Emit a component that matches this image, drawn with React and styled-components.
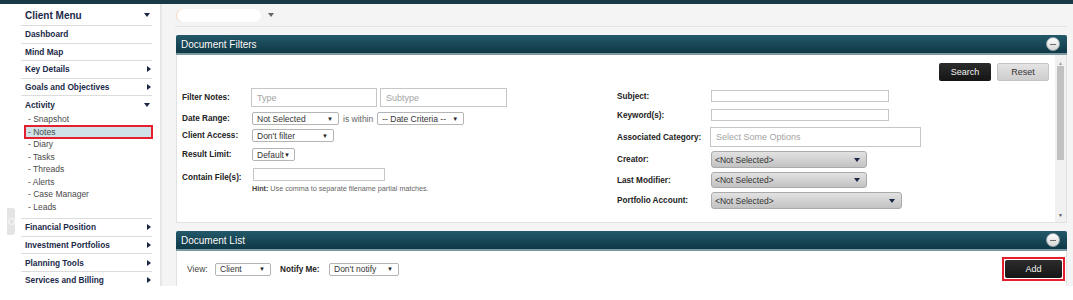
import styled, { createGlobalStyle } from "styled-components";

const GlobalStyle = createGlobalStyle`
    body {
        margin: 0;
        background: #fff;
        font-family: "Liberation Sans", Arial, sans-serif;
    }
`;

const menuTop = [
    { label: "Dashboard" },
    { label: "Mind Map" },
    { label: "Key Details", arrow: "right" },
    { label: "Goals and Objectives", arrow: "right" },
];
const activityItems = ["Snapshot", "Notes", "Diary", "Tasks", "Threads", "Alerts", "Case Manager", "Leads"];
const menuBottom = ["Financial Position", "Investment Portfolios", "Planning Tools", "Services and Billing"];

const Caret = ({ dir }) => (dir === "down" ? <DownCaret /> : <RightCaret />);

const Select = ({ text, width }) => (
    <SelectBox $width={width}>
        <span>{text}</span>
        <SmallArrow>▼</SmallArrow>
    </SelectBox>
);

const Chosen = ({ width }) => (
    <ChosenBox $width={width}>
        <span>&lt;Not Selected&gt;</span>
        <DownCaret />
    </ChosenBox>
);

const App = () => {
    return (
        <>
            <GlobalStyle />
            <TopBar />
            <Layout>
                <Sidebar>
                    <MenuHeader>
                        <span>Client Menu</span>
                        <Caret dir="down" />
                    </MenuHeader>
                    {menuTop.map((m) => (
                        <MenuItem key={m.label}>
                            <span>{m.label}</span>
                            {m.arrow && <Caret dir={m.arrow} />}
                        </MenuItem>
                    ))}
                    <MenuGroup>
                        <GroupTitle>
                            <span>Activity</span>
                            <Caret dir="down" />
                        </GroupTitle>
                        {activityItems.map((s) => (
                            <SubItem key={s} $active={s === "Notes"}>- {s}</SubItem>
                        ))}
                    </MenuGroup>
                    {menuBottom.map((m) => (
                        <MenuItem key={m}>
                            <span>{m}</span>
                            <Caret dir="right" />
                        </MenuItem>
                    ))}
                    <SideTab><TabDot /></SideTab>
                </Sidebar>
                <Main>
                    <ClientRow>
                        <Redacted />
                        <DownCaret $muted />
                    </ClientRow>
                    <Panel>
                        <PanelHeader>
                            <span>Document Filters</span>
                            <CollapseButton />
                        </PanelHeader>
                        <FilterBody>
                            <FilterContent>
                                <ButtonRow>
                                    <DarkButton>Search</DarkButton>
                                    <LightButton>Reset</LightButton>
                                </ButtonRow>
                                <FormColumns>
                                    <LeftColumn>
                                        <FormRow $top={0} $h={19}>
                                            <Label $w={69}>Filter Notes:</Label>
                                            <TextInput $width={126} $height={19}>Type</TextInput>
                                            <TextInput $width={127} $height={19} $ml={3}>Subtype</TextInput>
                                        </FormRow>
                                        <FormRow $top={5} $h={13}>
                                            <Label $w={70}>Date Range:</Label>
                                            <Select text="Not Selected" width={87} />
                                            <Within>is within</Within>
                                            <Select text="-- Date Criteria --" width={87} />
                                        </FormRow>
                                        <FormRow $top={4} $h={13}>
                                            <Label $w={70}>Client Access:</Label>
                                            <Select text="Don't filter" width={82} />
                                        </FormRow>
                                        <FormRow $top={6} $h={13}>
                                            <Label $w={70}>Result Limit:</Label>
                                            <Select text="Default" width={43} />
                                        </FormRow>
                                        <FileRow>
                                            <Label $w={70}>Contain File(s):</Label>
                                            <div>
                                                <TextInput $width={132} $height={13} $ml={1} />
                                                <Hint><b>Hint:</b> Use comma to separate filename partial matches.</Hint>
                                            </div>
                                        </FileRow>
                                    </LeftColumn>
                                    <RightColumn>
                                        <FormRow $top={0} $h={12}>
                                            <Label $w={94}>Subject:</Label>
                                            <TextInput $width={178} $height={12} />
                                        </FormRow>
                                        <FormRow $top={7} $h={12}>
                                            <Label $w={94}>Keyword(s):</Label>
                                            <TextInput $width={178} $height={12} />
                                        </FormRow>
                                        <FormRow $top={6} $h={20}>
                                            <Label $w={93}>Associated Category:</Label>
                                            <TextInput $width={211} $height={20}>Select Some Options</TextInput>
                                        </FormRow>
                                        <FormRow $top={4} $h={17}>
                                            <Label $w={94}>Creator:</Label>
                                            <Chosen width={156} />
                                        </FormRow>
                                        <FormRow $top={4} $h={16}>
                                            <Label $w={94}>Last Modifier:</Label>
                                            <Chosen width={156} />
                                        </FormRow>
                                        <FormRow $top={4} $h={17}>
                                            <Label $w={94}>Portfolio Account:</Label>
                                            <Chosen width={191} />
                                        </FormRow>
                                    </RightColumn>
                                </FormColumns>
                            </FilterContent>
                            <ScrollBar>
                                <ScrollArrow>▲</ScrollArrow>
                                <ScrollThumb />
                                <ScrollArrow $bottom>▼</ScrollArrow>
                            </ScrollBar>
                        </FilterBody>
                    </Panel>
                    <Panel $top={8}>
                        <PanelHeader>
                            <span>Document List</span>
                            <CollapseButton />
                        </PanelHeader>
                        <ListBody>
                            <ViewLabel>View:</ViewLabel>
                            <Select text="Client" width={56} />
                            <Label $w={49} $ml={9}>Notify Me:</Label>
                            <Select text="Don't notify" width={70} />
                            <AddWrap>
                                <DarkButton $w={57}>Add</DarkButton>
                            </AddWrap>
                        </ListBody>
                    </Panel>
                </Main>
            </Layout>
        </>
    );
};

const TopBar = styled.div`
    height: 4px;
    background: #183a47;
`;
const Layout = styled.div`
    display: flex;
    height: 282px;
`;
const Sidebar = styled.div`
    position: relative;
    width: 131px;
    padding-left: 21px;
    padding-right: 8px;
    border-right: 2px solid #e6e6e6;
    background: #fff;
`;
const RightCaret = styled.i`
    width: 0;
    height: 0;
    margin-right: 1px;
    border-top: 3.5px solid transparent;
    border-bottom: 3.5px solid transparent;
    border-left: 4px solid #1b2644;
`;
const DownCaret = styled.i`
    width: 0;
    height: 0;
    border-left: 3.5px solid transparent;
    border-right: 3.5px solid transparent;
    border-top: 4px solid ${(p) => (p.$muted ? "#666" : "#1b2644")};
`;
const MenuRow = styled.div`
    display: flex;
    align-items: center;
    justify-content: space-between;
    padding-left: 4px;
    padding-right: 0;
    box-sizing: border-box;
    color: #1b2a48;
    font-weight: bold;
    font-size: 8.3px;
`;
const MenuHeader = styled(MenuRow)`
    height: 22px;
    font-size: 10px;
    border-bottom: 1px solid #dcdcdc;
    padding-top: 1px;
    padding-right: 2px;
`;
const MenuItem = styled(MenuRow)`
    height: 17.6px;
    border-bottom: 1px solid #dcdcdc;
`;
const MenuGroup = styled.div`
    padding-bottom: 5px;
    border-bottom: 1px solid #dcdcdc;
`;
const GroupTitle = styled(MenuRow)`
    height: 16.8px;
    padding-right: 2px;
`;
const SubItem = styled.div`
    height: 12.5px;
    line-height: 12.5px;
    box-sizing: border-box;
    margin-left: 4px;
    padding-left: 3px;
    font-size: 8.5px;
    color: #4a4a4a;
    background: ${(p) => (p.$active ? "#cfe2e8" : "transparent")};
    outline: ${(p) => (p.$active ? "2px solid #e5202e" : "none")};
    outline-offset: -1px;
`;
const SideTab = styled.div`
    position: absolute;
    left: 7px;
    top: 204px;
    width: 8px;
    height: 27px;
    border-radius: 0 3px 3px 0;
    background: #e4e4e4;
    display: flex;
    align-items: center;
    justify-content: center;
`;
const TabDot = styled.i`
    width: 5px;
    height: 5px;
    border-radius: 50%;
    border: 1px solid #fafafa;
`;
const Main = styled.div`
    flex: 1;
    background: #f4f4f4;
    padding: 0 6px 0 14px;
`;
const ClientRow = styled.div`
    height: 22px;
    display: flex;
    align-items: center;
    gap: 7px;
    padding-left: 2px;
    margin-left: -1px;
    border-bottom: 1px solid #e3e3e3;
`;
const Redacted = styled.div`
    width: 84px;
    height: 13px;
    border-radius: 7px;
    background: #fff;
    box-shadow: -1px 0 0 #f3d9c0;
`;
const Panel = styled.div`
    margin-top: ${(p) => p.$top ?? 8}px;
    background: #fff;
    border: 1px solid #e2e2e2;
    border-top: none;
`;
const PanelHeader = styled.div`
    height: 18px;
    display: flex;
    align-items: center;
    justify-content: space-between;
    padding: 0 6px 0 5px;
    margin: 0 -1px;
    background: linear-gradient(#23596a, #0e3846);
    border-bottom: 2px solid #7d99a3;
    color: #fff;
    font-size: 10px;
    text-shadow: 0 0 1px rgba(0, 0, 0, 0.4);
    border-radius: 2px 2px 0 0;
`;
const CollapseButton = styled.i`
    position: relative;
    width: 12px;
    height: 12px;
    margin-right: 1px;
    border-radius: 50%;
    background: linear-gradient(#ffffff, #d6d6d6);
    border: 1px solid #9aa9ae;

    &::after {
        content: "";
        position: absolute;
        left: 3px;
        top: 5.5px;
        width: 6px;
        height: 1.5px;
        background: #6d6d6d;
    }
`;
const FilterBody = styled.div`
    display: flex;
    height: 167px;
`;
const FilterContent = styled.div`
    flex: 1;
    padding: 8px 6px 0 5px;
`;
const ButtonRow = styled.div`
    display: flex;
    justify-content: flex-end;
    gap: 6px;
    padding-right: 0;
`;
const DarkButton = styled.div`
    width: ${(p) => p.$w ?? 52}px;
    height: 18px;
    box-sizing: border-box;
    display: flex;
    align-items: center;
    justify-content: center;
    border-radius: 2px;
    background: linear-gradient(#2c2c2c, #151515);
    color: #f2f2f2;
    font-size: 9px;
`;
const LightButton = styled(DarkButton)`
    background: linear-gradient(#e4e4e4, #cdcdcd);
    border: 1px solid #c4c4c4;
    color: #333;
`;
const FormColumns = styled.div`
    display: flex;
    margin-top: 7px;
`;
const LeftColumn = styled.div`
    width: 435px;
`;
const RightColumn = styled.div`
    margin-top: 2px;
`;
const FormRow = styled.div`
    display: flex;
    align-items: center;
    height: ${(p) => p.$h}px;
    margin-top: ${(p) => p.$top}px;
`;
const FileRow = styled.div`
    display: flex;
    align-items: flex-start;
    margin-top: 7px;
`;
const Label = styled.div`
    width: ${(p) => p.$w}px;
    margin-left: ${(p) => p.$ml ?? 0}px;
    flex-shrink: 0;
    font-size: 8.2px;
    font-weight: bold;
    color: #222;
    ${FileRow} & {
        margin-top: 5px;
    }
`;
const TextInput = styled.div`
    width: ${(p) => p.$width}px;
    height: ${(p) => p.$height}px;
    margin-left: ${(p) => p.$ml ?? 0}px;
    box-sizing: border-box;
    display: flex;
    align-items: center;
    padding-left: 5px;
    border: 1px solid #c6c6c6;
    background: #fff;
    color: #a3a3a3;
    font-size: 9px;
`;
const SelectBox = styled.div`
    width: ${(p) => p.$width}px;
    height: 13px;
    box-sizing: border-box;
    display: flex;
    align-items: center;
    justify-content: space-between;
    padding: 0 5px 0 4px;
    border: 1px solid #b4b4b4;
    border-radius: 2px;
    background: #fff;
    color: #333;
    font-size: 8.5px;
    white-space: nowrap;
`;
const SmallArrow = styled.span`
    font-size: 6px;
    color: #222;
`;
const Within = styled.span`
    margin: 0 4px;
    font-size: 8.5px;
    color: #666;
`;
const Hint = styled.div`
    margin-top: 3px;
    font-size: 7.2px;
    color: #666;

    b {
        color: #444;
    }
`;
const ChosenBox = styled.div`
    width: ${(p) => p.$width}px;
    height: 100%;
    box-sizing: border-box;
    display: flex;
    align-items: center;
    justify-content: space-between;
    padding: 0 6px 0 3px;
    border: 1px solid #aaa;
    border-radius: 3px;
    background: linear-gradient(#e2e2e2, #c2c2c2);
    color: #333;
    font-size: 8.5px;
`;
const ScrollBar = styled.div`
    width: 11px;
    display: flex;
    flex-direction: column;
    align-items: center;
    background: #f1f1f1;
`;
const ScrollArrow = styled.span`
    height: 10px;
    margin-top: ${(p) => (p.$bottom ? "auto" : "3px")};
    margin-bottom: ${(p) => (p.$bottom ? "2px" : "0")};
    font-size: 5px;
    line-height: 10px;
    color: ${(p) => (p.$bottom ? "#505050" : "#a3a3a3")};
`;
const ScrollThumb = styled.div`
    width: 7px;
    height: 94px;
    margin-top: -2px;
    background: #c1c1c1;
`;
const ListBody = styled.div`
    height: 36px;
    display: flex;
    align-items: center;
    padding: 0 1px 0 10px;
`;
const ViewLabel = styled.span`
    width: 28px;
    font-size: 8.5px;
    color: #444;
`;
const AddWrap = styled.div`
    margin-left: auto;
    padding: 1px;
    border: 2px solid #e5202e;
`;

export default App;
